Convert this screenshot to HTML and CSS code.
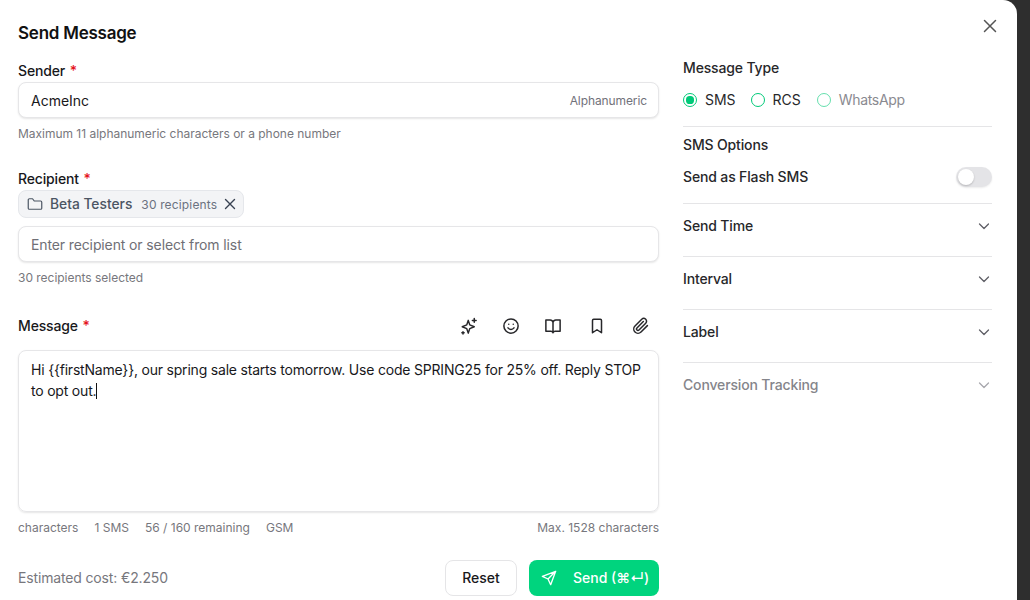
FILE: index.html
```html
<!DOCTYPE html>
<html lang="en">
<head>
<meta charset="utf-8">
<title>Send Message</title>
<link rel="stylesheet" href="styles.css">
</head>
<body>
<main class="modal">
  <h1 class="title">Send Message</h1>
  <button class="close" aria-label="Close">
    <svg width="20" height="20" viewBox="0 0 20 20" fill="none" stroke="currentColor" stroke-width="1.5" stroke-linecap="round"><path d="M4.500 4.500l11 11M15.500 4.500l-11 11"/></svg>
  </button>
  <div class="columns">
    <section class="left">
      <div class="field sender-field">
        <label class="label">Sender <span class="req">*</span></label>
        <div class="input"><span class="value">AcmeInc</span><span class="suffix">Alphanumeric</span></div>
        <p class="hint">Maximum 11 alphanumeric characters or a phone number</p>
      </div>
      <div class="field recipient-field">
        <label class="label">Recipient <span class="req">*</span></label>
        <div class="chip">
          <svg class="chip-folder" width="18" height="18" viewBox="0 0 24 24" fill="none" stroke="currentColor" stroke-width="1.600" stroke-linejoin="round"><path d="M3 6.500A1.500 1.500 0 0 1 4.500 5h4.200l2.300 3h8.500A1.500 1.500 0 0 1 21 9.500v8a1.500 1.500 0 0 1-1.500 1.500h-15A1.500 1.500 0 0 1 3 17.500z"/></svg>
          <span class="chip-name">Beta Testers</span>
          <span class="chip-count">30 recipients</span>
          <svg class="chip-x" width="14" height="14" viewBox="0 0 14 14" fill="none" stroke="currentColor" stroke-width="1.400" stroke-linecap="round"><path d="M2.500 2.500l9 9M11.500 2.500l-9 9"/></svg>
        </div>
        <div class="input"><span class="placeholder">Enter recipient or select from list</span></div>
        <p class="hint">30 recipients selected</p>
      </div>
      <div class="field message-field">
        <div class="message-head">
          <label class="label">Message <span class="req">*</span></label>
          <div class="tools">
            <svg width="18" height="18" viewBox="0 0 24 24" fill="none" stroke="currentColor" stroke-width="2" stroke-linejoin="round" stroke-linecap="round"><path d="M11 4.500l2 6 6 2.500-6 2.500-2 6-2-6-6-2.500 6-2.500z"/><path d="M19 2v5M16.500 4.500h5M4 19.500v3M2.500 21h3"/></svg>
            <svg width="18" height="18" viewBox="0 0 24 24" fill="none" stroke="currentColor" stroke-width="2" stroke-linecap="round"><circle cx="12" cy="12" r="9.500"/><path d="M8 14.500a5 5 0 0 0 8 0M9 9.500v.01M15 9.500v.01"/></svg>
            <svg width="18" height="18" viewBox="0 0 24 24" fill="none" stroke="currentColor" stroke-width="2" stroke-linejoin="round"><path d="M12 7a4 4 0 0 0-4-3H2.500v15H9a3 3 0 0 1 3 2 3 3 0 0 1 3-2h6.500V4H16a4 4 0 0 0-4 3zM12 7v14"/></svg>
            <svg class="tool-wide" width="18" height="18" viewBox="0 0 24 24" fill="none" stroke="currentColor" stroke-width="2" stroke-linejoin="round"><path d="M6 4.500A1.500 1.500 0 0 1 7.500 3h9A1.500 1.500 0 0 1 18 4.500V21l-6-4-6 4z"/></svg>
            <svg class="tool-wide" width="18" height="18" viewBox="0 0 24 24" fill="none" stroke="currentColor" stroke-width="2" stroke-linecap="round" stroke-linejoin="round"><path d="M20.500 11.500l-8.500 8.500a5.500 5.500 0 0 1-8-8l9-9a3.700 3.700 0 0 1 5.300 5.300l-9 9a1.900 1.900 0 0 1-2.700-2.700l8.500-8.500"/></svg>
          </div>
        </div>
        <div class="textarea">Hi {{firstName}}, our spring sale starts tomorrow. Use code SPRING25 for 25% off. Reply STOP to opt out.<span class="caret"></span></div>
        <div class="counts">
          <span>characters</span><span>1 SMS</span><span>56 / 160 remaining</span><span>GSM</span>
          <span class="max">Max. 1528 characters</span>
        </div>
      </div>
      <div class="actions">
        <span class="cost">Estimated cost: €2.250</span>
        <button class="btn-reset">Reset</button>
        <button class="btn-send">
          <svg width="16" height="16" viewBox="0 0 24 24" fill="none" stroke="currentColor" stroke-width="2" stroke-linejoin="round" stroke-linecap="round"><path d="M22 2L2 9.500l8.500 4L14.500 22zM22 2L10.500 13.500"/></svg>
          <span>Send (⌘↵)</span>
        </button>
      </div>
    </section>
    <aside class="right">
      <h2 class="side-title">Message Type</h2>
      <div class="radios">
        <span class="radio"><i class="dot on"></i>SMS</span>
        <span class="radio"><i class="dot"></i>RCS</span>
        <span class="radio off"><i class="dot"></i>WhatsApp</span>
      </div>
      <div class="options">
        <h2 class="side-title">SMS Options</h2>
        <div class="flash"><span>Send as Flash SMS</span><i class="toggle"></i></div>
      </div>
      <div class="row">Send Time<svg class="chev" width="14" height="14" viewBox="0 0 14 14" fill="none" stroke="currentColor" stroke-width="1.300" stroke-linecap="round" stroke-linejoin="round"><path d="M2.500 5l4.500 4.500L11.500 5"/></svg></div>
      <div class="row">Interval<svg class="chev" width="14" height="14" viewBox="0 0 14 14" fill="none" stroke="currentColor" stroke-width="1.300" stroke-linecap="round" stroke-linejoin="round"><path d="M2.500 5l4.500 4.500L11.500 5"/></svg></div>
      <div class="row">Label<svg class="chev" width="14" height="14" viewBox="0 0 14 14" fill="none" stroke="currentColor" stroke-width="1.300" stroke-linecap="round" stroke-linejoin="round"><path d="M2.500 5l4.500 4.500L11.500 5"/></svg></div>
      <div class="row disabled">Conversion Tracking<svg class="chev" width="14" height="14" viewBox="0 0 14 14" fill="none" stroke="currentColor" stroke-width="1.300" stroke-linecap="round" stroke-linejoin="round"><path d="M2.500 5l4.500 4.500L11.500 5"/></svg></div>
    </aside>
  </div>
</main>
</body>
</html>
```
FILE: styles.css
```css
* { box-sizing: border-box; }
html, body { margin: 0; height: 600px; overflow: hidden; }
body { background: #2e2e2e; font-family: Inter, "Liberation Sans", sans-serif; color: #18181b; }
.modal { position: relative; width: 1017px; height: 600px; background: #fff; border-top-right-radius: 14px; padding: 0 25px 0 18px; overflow: hidden; }
.title { margin: 0; padding-top: 23px; height: 56px; font-size: 17px; line-height: 21px; font-weight: 600; letter-spacing: -0.24px; color: #111; }
.close { position: absolute; top: 16px; right: 17px; width: 20px; height: 20px; padding: 0; border: 0; background: none; color: #555; display: block; }
.close svg { display: block; }
.columns { display: flex; gap: 24px; }
.left { width: 641px; flex: none; }
.right { width: 309px; flex: none; margin-top: 3px; color: #27272a; }
.label { display: block; font-size: 14px; line-height: 18px; font-weight: 500; height: 18px; letter-spacing: -0.15px; }
.req { color: #e5131d; margin-left: 1px; }
.sender-field .label { margin-top: 6px; }
.sender-field .input { margin-top: 2px; }
.input { height: 36px; border: 1px solid #e6e6e8; border-radius: 8px; box-shadow: 0 1px 2px rgba(0,0,0,.1); padding: 0 11px 0 12px; display: flex; align-items: center; justify-content: space-between; font-size: 14px; background: #fff; }
.value { color: #18181b; }
.suffix { font-size: 12px; color: #71717a; letter-spacing: -0.1px; }
.placeholder { color: #6f6f76; letter-spacing: -0.12px; }
.hint { margin: 8px 0 0; font-size: 12px; line-height: 15px; color: #77777d; letter-spacing: -0.02px; }
.recipient-field { margin-top: 29px; }
.chip { margin-top: 2px; width: 226px; height: 28px; display: flex; align-items: center; background: #f3f4f6; border: 1px solid #e5e7eb; border-radius: 8px; padding: 0 6px 0 7px; }
.chip-folder { color: #4b5563; flex: none; }
.chip-name { margin-left: 6px; font-size: 13.8px; font-weight: 500; color: #4b5563; white-space: nowrap; }
.chip-count { margin-left: 9px; font-size: 12px; color: #6b7280; letter-spacing: 0.15px; white-space: nowrap; }
.chip-x { margin-left: auto; color: #374151; flex: none; }
.recipient-field .input { margin-top: 8px; }
.message-field { margin-top: 25px; }
.message-head { height: 32px; display: flex; align-items: center; justify-content: space-between; }
.tools { display: flex; gap: 24px; padding-right: 9px; color: #27272a; }
.tools svg { display: block; width: 18px; height: 18px; }
.tools .tool-wide { margin-left: 2px; }
.textarea { margin-top: 8px; height: 162px; border: 1px solid #e6e6e8; border-radius: 8px; box-shadow: 0 1px 2px rgba(0,0,0,.1); padding: 8px 12px; font-size: 14px; line-height: 21px; letter-spacing: -0.2px; color: #18181b; }
.caret { display: inline-block; width: 1px; height: 16px; background: #111; vertical-align: -3px; }
.counts { margin-top: 8px; display: flex; gap: 16px; font-size: 12px; line-height: 15px; color: #77777d; }
.max { margin-left: auto; }
.actions { margin-top: 25px; display: flex; align-items: center; }
.cost { font-size: 14px; color: #77777d; margin-right: auto; letter-spacing: -0.15px; padding-bottom: 2px; }
.btn-reset { width: 72px; height: 36px; border: 1px solid #e5e5e7; border-radius: 8px; background: #fff; font: 500 14px Inter, "Liberation Sans", sans-serif; color: #18181b; padding: 0 0 2px; }
.btn-send { margin-left: 12px; width: 130px; height: 36px; border: 0; border-radius: 8px; background: #00d47e; color: #fff; font: 500 14px Inter, "DejaVu Sans", sans-serif; display: flex; align-items: center; padding: 0 0 0 12px; gap: 16px; white-space: nowrap; }
.btn-send svg { flex: none; }
.btn-send span { padding-bottom: 2px; }
.side-title { margin: 0; font-size: 14px; line-height: 18px; font-weight: 500; letter-spacing: -0.15px; }
.radios { margin-top: 14px; display: flex; gap: 15px; height: 18px; }
.radio { display: flex; align-items: center; gap: 8px; font-size: 14px; line-height: 18px; letter-spacing: -0.03px; }
.radio.off { color: #8a8a90; letter-spacing: -0.3px; margin-left: 1px; }
.radio.off .dot { opacity: .6; }
.dot { width: 14px; height: 14px; border-radius: 50%; border: 1.2px solid #00c978; display: block; position: relative; }
.dot.on::after { content: ""; position: absolute; inset: 2.400px; border-radius: 50%; background: #00c978; }
.options { margin-top: 17px; border-top: 1px solid #e5e5e7; padding: 9px 0 0; height: 77px; }
.flash { margin-top: 14px; display: flex; align-items: center; justify-content: space-between; font-size: 14px; line-height: 18px; font-weight: 500; height: 18px; letter-spacing: -0.15px; }
.toggle { display: block; position: relative; width: 36px; height: 20px; border-radius: 10px; background: #e4e4e7; box-shadow: 0 1px 2px rgba(0,0,0,.08); }
.toggle::after { content: ""; position: absolute; left: 2px; top: 2px; width: 16px; height: 16px; border-radius: 50%; background: #fff; box-shadow: 0 1px 2px rgba(0,0,0,.2); }
.row { height: 53px; border-top: 1px solid #e5e5e7; display: flex; align-items: center; justify-content: space-between; font-size: 14px; font-weight: 500; letter-spacing: -0.15px; padding: 0 1px 9px 0; }
.chev { color: #5f5f66; }
.row.disabled { color: #85858b; }
.row.disabled .chev { color: #a8a8ad; }
```
